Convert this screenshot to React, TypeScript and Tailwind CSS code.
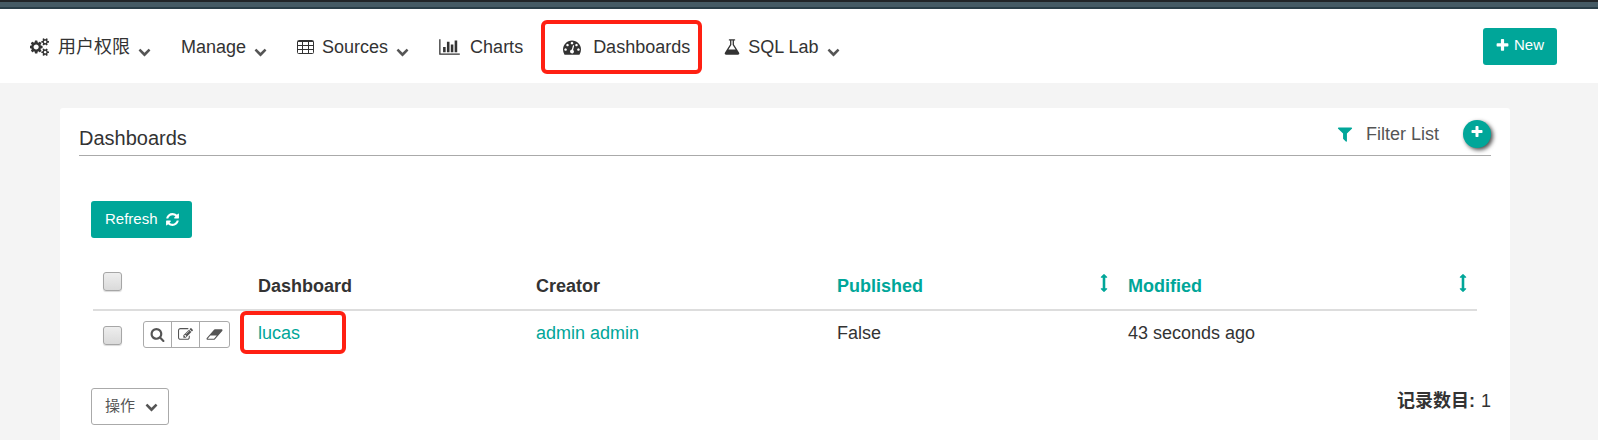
import React from "react";

type IconProps = { d: string; box?: string; className?: string };

function Icon({ d, box = "0 0 1792 1792", className = "" }: IconProps) {
  return (
    <svg viewBox={box} fill="currentColor" aria-hidden="true" className={`shrink-0 ${className}`}>
      <path d={d} />
    </svg>
  );
}

const paths = {
  plus: "M1600 736v192q0 40-28 68t-68 28h-416v416q0 40-28 68t-68 28h-192q-40 0-68-28t-28-68v-416h-416q-40 0-68-28t-28-68v-192q0-40 28-68t68-28h416v-416q0-40 28-68t68-28h192q40 0 68 28t28 68v416h416q40 0 68 28t28 68z",
  filter:
    "M1595 295q17 41-14 70l-493 493v742q0 42-39 59-13 5-25 5-27 0-45-19l-256-256q-19-19-19-45v-486l-493-493q-31-29-14-70 17-39 59-39h1280q42 0 59 39z",
  search:
    "M1216 832q0-185-131.5-316.5t-316.5-131.5-316.5 131.5-131.5 316.5 131.5 316.5 316.5 131.5 316.5-131.5 131.5-316.5zm512 832q0 52-38 90t-90 38q-54 0-90-38l-343-342q-179 124-399 124-143 0-273.5-55.5t-225-150-150-225-55.5-273.5 55.5-273.5 150-225 225-150 273.5-55.5 273.5 55.5 225 150 150 225 55.5 273.5q0 220-124 399l343 343q37 37 37 90z",
  chevron:
    "M1683 808l-742 741q-19 19-45 19t-45-19l-742-741q-19-19-19-45.5t19-45.5l166-165q19-19 45-19t45 19l531 531 531-531q19-19 45-19t45 19l166 165q19 19 19 45.5t-19 45.5z",
  refresh:
    "M1639 1056q0 5-1 7-64 268-268 434.5t-478 166.5q-146 0-282.5-55t-243.5-157l-129 129q-19 19-45 19t-45-19-19-45v-448q0-26 19-45t45-19h448q26 0 45 19t19 45-19 45l-137 137q71 66 161 102t187 36q134 0 250-65t186-179q11-17 53-117 8-23 30-23h192q13 0 22.5 9.5t9.5 22.5zm25-800v448q0 26-19 45t-45 19h-448q-26 0-45-19t-19-45 19-45l138-138q-148-137-349-137-134 0-250 65t-186 179q-11 17-53 117-8 23-30 23h-199q-13 0-22.5-9.5t-9.5-22.5v-7q65-268 270-434.5t480-166.5q146 0 284 55.5t245 156.5l130-129q19-19 45-19t45 19 19 45z",
  chart:
    "M640 896v512h-256v-512h256zm384-512v1024h-256v-1024h256zm1024 1152v128h-2048v-1536h128v1408h1920zm-640-896v768h-256v-768h256zm384-384v1152h-256v-1152h256z",
  edit: "M888 1184l116-116-152-152-116 116v56h96v96h56zm440-720q-16-16-33 1l-350 350q-17 17-1 33t33-1l350-350q17-17 1-33zm80 594v190q0 119-84.5 203.5t-203.5 84.5h-832q-119 0-203.5-84.5t-84.5-203.5v-832q0-119 84.5-203.5t203.5-84.5h832q63 0 117 25 15 7 18 23 3 17-9 29l-49 49q-14 14-32 8-23-6-45-6h-832q-66 0-113 47t-47 113v832q0 66 47 113t113 47h832q66 0 113-47t47-113v-126q0-13 9-22l64-64q15-15 35-7t20 29zm-96-738l288 288-672 672h-288v-288zm444 132l-92 92-288-288 92-92q28-28 68-28t68 28l152 152q28 28 28 68t-28 68z",
  eraser:
    "M960 1408l336-384h-768l-336 384h768zm1013-1077q15 34 9.5 71.5t-30.5 65.5l-896 1024q-38 44-96 44h-768q-38 0-69.5-20.5t-47.5-54.5q-15-34-9.5-71.5t30.5-65.5l896-1024q38-44 96-44h768q38 0 69.5 20.5t47.5 54.5z",
  flask:
    "M1591 1448q56 89 21.5 152.5t-140.5 63.5h-1152q-106 0-140.5-63.5t21.5-152.5l503-793v-399h-64q-26 0-45-19t-19-45 19-45 45-19h512q26 0 45 19t19 45-19 45-45 19h-64v399zm-779-725l-272 429h712l-272-429-20-31v-436h-128v436z",
  sort: "M1216 320q0 26-19 45t-45 19h-128v1024h128q26 0 45 19t19 45-19 45l-256 256q-19 19-45 19t-45-19l-256-256q-19-19-19-45t19-45 45-19h128v-1024h-128q-26 0-45-19t-19-45 19-45l256-256q19-19 45-19t45 19l256 256q19 19 19 45z",
  gauge:
    "M384 1152q0-53-37.5-90.5t-90.5-37.5-90.5 37.5-37.5 90.5 37.5 90.5 90.5 37.5 90.5-37.5 37.5-90.5zm192-448q0-53-37.5-90.5t-90.5-37.5-90.5 37.5-37.5 90.5 37.5 90.5 90.5 37.5 90.5-37.5 37.5-90.5zm428 481l101-382q6-26-7.5-48.5t-38.5-29.5-48 6.5-30 39.5l-101 382q-60 5-107 43.5t-63 98.5q-20 77 20 146t117 89 146-20 89-117q16-60-6-117t-72-91zm660-33q0-53-37.5-90.5t-90.5-37.5-90.5 37.5-37.5 90.5 37.5 90.5 90.5 37.5 90.5-37.5 37.5-90.5zm-640-640q0-53-37.5-90.5t-90.5-37.5-90.5 37.5-37.5 90.5 37.5 90.5 90.5 37.5 90.5-37.5 37.5-90.5zm448 192q0-53-37.5-90.5t-90.5-37.5-90.5 37.5-37.5 90.5 37.5 90.5 90.5 37.5 90.5-37.5 37.5-90.5zm320 448q0 261-141 483-19 29-54 29h-1402q-35 0-54-29-141-221-141-483 0-182 71-348t191-286 286-191 348-71 348 71 286 191 191 286 71 348z",
  cogs: "M832 896q0-106-75-181t-181-75-181 75-75 181 75 181 181 75 181-75 75-181zm768 512q0-52-38-90t-90-38-90 38-38 90q0 53 37.5 90.5t90.5 37.5 90.5-37.5 37.5-90.5zm0-1024q0-52-38-90t-90-38-90 38-38 90q0 53 37.5 90.5t90.5 37.5 90.5-37.5 37.5-90.5zm-384 421v185q0 10-7 19.5t-16 10.5l-155 24q-11 35-32 76 34 48 90 115 7 11 7 20 0 12-7 19-23 30-82.5 89.5t-78.5 59.5q-11 0-21-7l-115-90q-37 19-77 31-11 108-23 155-7 24-30 24h-186q-11 0-20-7.5t-10-17.5l-23-153q-34-10-75-31l-118 89q-7 7-20 7-11 0-21-8-144-133-144-160 0-9 7-19 10-14 41-53t47-61q-23-44-35-82l-152-24q-10-1-17-9.5t-7-19.5v-185q0-10 7-19.5t16-10.5l155-24q11-35 32-76-34-48-90-115-7-11-7-20 0-12 7-20 22-30 82-89t79-59q11 0 21 7l115 90q34-18 77-32 11-108 23-154 7-24 30-24h186q11 0 20 7.5t10 17.5l23 153q34 10 75 31l118-89q8-7 20-7 11 0 21 8 144 133 144 160 0 8-7 19-12 16-42 54t-45 60q23 48 34 82l152 23q10 2 17 10.5t7 19.5zm640 533v140q0 16-149 31-12 27-30 52 51 113 51 138 0 4-4 7-122 71-124 71-8 0-46-47t-52-68q-20 2-30 2t-30-2q-14 21-52 68t-46 47q-2 0-124-71-4-3-4-7 0-25 51-138-18-25-30-52-149-15-149-31v-140q0-16 149-31 13-29 30-52-51-113-51-138 0-4 4-7 4-2 35-20t59-34 30-16q8 0 46 46.500t52 67.500q20-2 30-2t30 2q51-71 92-112l6-2q4 0 124 70 4 3 4 7 0 25-51 138 17 23 30 52 149 15 149 31zm0-1024v140q0 16-149 31-12 27-30 52 51 113 51 138 0 4-4 7-122 71-124 71-8 0-46-47t-52-68q-20 2-30 2t-30-2q-14 21-52 68t-46 47q-2 0-124-71-4-3-4-7 0-25 51-138-18-25-30-52-149-15-149-31v-140q0-16 149-31 13-29 30-52-51-113-51-138 0-4 4-7 4-2 35-20t59-34 30-16q8 0 46 46.500t52 67.500q20-2 30-2t30 2q51-71 92-112l6-2q4 0 124 70 4 3 4 7 0 25-51 138 17 23 30 52 149 15 149 31z",
};

function TableIcon() {
  return (
    <svg viewBox="0 0 17 15" fill="none" stroke="currentColor" aria-hidden="true" className="h-[15px] w-[17px] shrink-0">
      <rect x="0.5" y="0.5" width="16" height="13" rx="1" />
      <path d="M1 1.500h15M1 5.500h15M1 9.500h15M5.500 1v13M11.500 1v13" />
    </svg>
  );
}

function Caret() {
  return <Icon d={paths.chevron} className="mt-2 size-[13px] text-[#555]" />;
}

function Highlight({ className }: { className: string }) {
  return (
    <span
      aria-hidden="true"
      className={`pointer-events-none absolute rounded-md border-4 border-[#ff2012] ${className}`}
    />
  );
}

function Tick({ label }: { label: string }) {
  return (
    <input
      type="checkbox"
      aria-label={label}
      className="block size-[19px] appearance-none rounded-[3px] border border-[#a6a6a6] bg-linear-to-b from-[#eee] to-[#dadada] shadow-[0_1px_1px_rgba(0,0,0,0.15)] checked:bg-[#00a699]"
    />
  );
}

function NavBar() {
  return (
    <header className="flex h-[74px] items-center justify-between bg-white pr-[41px] pl-[30px]">
      <nav className="flex items-center gap-[30px] pt-0.5 text-[18px] leading-6 text-[#333]">
        <a href="#security" className="flex items-center gap-2">
          <Icon d={paths.cogs} box="0 0 1920 1792" className="h-[18px] w-5" />
          用户权限
          <Caret />
        </a>
        <a href="#manage" className="flex items-center gap-2">
          Manage
          <Caret />
        </a>
        <a href="#sources" className="flex items-center gap-2">
          <TableIcon />
          Sources
          <Caret />
        </a>
        <a href="#charts" className="flex items-center gap-[10px]">
          <Icon d={paths.chart} box="0 0 2048 1792" className="h-[18px] w-[21px]" />
          Charts
        </a>
        <a href="#dashboards" className="relative mr-1 ml-[10px] flex items-center gap-3">
          <Icon d={paths.gauge} className="size-[18px]" />
          Dashboards
          <Highlight className="-inset-y-[15px] -right-3 -left-[22px]" />
        </a>
        <a href="#sqllab" className="flex items-center gap-2">
          <Icon d={paths.flask} box="128 0 1536 1792" className="h-[18px] w-4" />
          SQL Lab
          <Caret />
        </a>
      </nav>
      <button
        type="button"
        className="flex h-[37px] items-center gap-1 rounded-[3px] bg-[#00a699] pr-[13px] pb-0.5 pl-3 text-[15px] text-white"
      >
        <Icon d={paths.plus} className="size-[15px]" />
        New
      </button>
    </header>
  );
}

function SortHeader({ children }: { children: string }) {
  return (
    <a href={`#${children.toLowerCase()}`} className="flex items-start justify-between text-[#00a699]">
      {children}
      <Icon d={paths.sort} box="512 0 768 1792" className="h-[18px] w-2" />
    </a>
  );
}

const actions = [
  { name: "Show", d: paths.search, box: "0 0 1792 1792", icon: "size-[15px]", cell: "w-[27px]" },
  { name: "Edit", d: paths.edit, box: "0 0 1792 1792", icon: "size-[15px]", cell: "w-7 border-l border-[#aaa]" },
  { name: "Delete", d: paths.eraser, box: "0 0 2048 1792", icon: "h-[15px] w-[17px]", cell: "w-[30px] border-l border-[#aaa]" },
];

export default function App() {
  return (
    <div className="flex min-h-screen flex-col bg-[#f4f4f4] font-['Liberation_Sans','Noto_Sans_CJK_SC',sans-serif] text-[#333]">
      <div className="h-[9px] border-t-2 border-b-2 border-t-[#222528] border-b-[#2a3e48] bg-[#455a64]" />
      <NavBar />
      <main className="mt-[25px] mr-22 ml-15 flex-1 rounded-t-[3px] bg-white px-[19px] pb-4">
        <div className="flex h-12 items-start justify-between border-b border-[#aaa]">
          <h1 className="pt-[18px] text-[20px] leading-6">Dashboards</h1>
          <div className="flex items-center pt-3">
            <a href="#filter" className="flex items-center gap-3 text-[18px] leading-6 text-[#555]">
              <Icon d={paths.filter} className="size-[18px] text-[#00a699]" />
              Filter List
            </a>
            <button
              type="button"
              aria-label="Add dashboard"
              className="ml-6 flex size-7 items-center justify-center rounded-full bg-[#00a699] pb-1 text-white shadow-[2px_2px_4px_rgba(0,0,0,0.7)]"
            >
              <Icon d={paths.plus} className="size-[14px]" />
            </button>
          </div>
        </div>

        <div className="pt-[45px] pl-3">
          <button
            type="button"
            className="flex h-[37px] items-center gap-[7px] rounded-[3px] bg-[#00a699] pr-3 pl-[14px] text-[15px] text-white"
          >
            Refresh
            <Icon d={paths.refresh} className="size-[15px]" />
          </button>
        </div>

        <div className="mt-[26px] pr-[14px] pl-[14px]">
          <table className="w-full table-fixed border-collapse text-left text-[18px] leading-[25px]">
            <colgroup>
              <col className="w-[40px]" />
              <col className="w-[115px]" />
              <col className="w-[278px]" />
              <col className="w-[301px]" />
              <col className="w-[291px]" />
              <col className="w-[359px]" />
            </colgroup>
            <thead>
              <tr className="border-b-2 border-[#ddd] align-top">
                <th className="px-[10px] pt-2">
                  <Tick label="Select all" />
                </th>
                <th aria-label="Actions" />
                <th className="p-[10px]">Dashboard</th>
                <th className="p-[10px]">Creator</th>
                <th className="p-[10px]">
                  <SortHeader>Published</SortHeader>
                </th>
                <th className="p-[10px]">
                  <SortHeader>Modified</SortHeader>
                </th>
              </tr>
            </thead>
            <tbody>
              <tr className="align-top">
                <td className="px-[10px] pt-[15px]">
                  <Tick label="Select lucas" />
                </td>
                <td className="p-[10px]">
                  <div className="flex h-[27px] w-[87px] rounded-[3px] border border-[#aaa] text-[#555]">
                    {actions.map((a) => (
                      <button
                        key={a.name}
                        type="button"
                        aria-label={a.name}
                        className={`flex items-center justify-center pb-px ${a.cell}`}
                      >
                        <Icon d={a.d} box={a.box} className={a.icon} />
                      </button>
                    ))}
                  </div>
                </td>
                <td className="p-[10px]">
                  <a href="#lucas" className="relative inline-block text-[#00a699]">
                    lucas
                    <Highlight className="-top-[10px] -left-[18px] h-[43px] w-[106px]" />
                  </a>
                </td>
                <td className="p-[10px]">
                  <a href="#admin" className="text-[#00a699]">
                    admin admin
                  </a>
                </td>
                <td className="p-[10px]">False</td>
                <td className="p-[10px]">43 seconds ago</td>
              </tr>
            </tbody>
          </table>
        </div>

        <div className="mt-[30px] flex items-start justify-between pl-3">
          <button
            type="button"
            aria-haspopup="menu"
            className="flex h-[37px] items-center gap-[10px] rounded-[3px] border border-[#aaa] pr-[10px] pl-[13px] text-[15px] text-[#555]"
          >
            操作
            <Icon d={paths.chevron} className="size-[13px]" />
          </button>
          <p className="flex gap-[6px] text-[18px] leading-[26px]">
            <strong>记录数目:</strong>
            <span>1</span>
          </p>
        </div>
      </main>
    </div>
  );
}
